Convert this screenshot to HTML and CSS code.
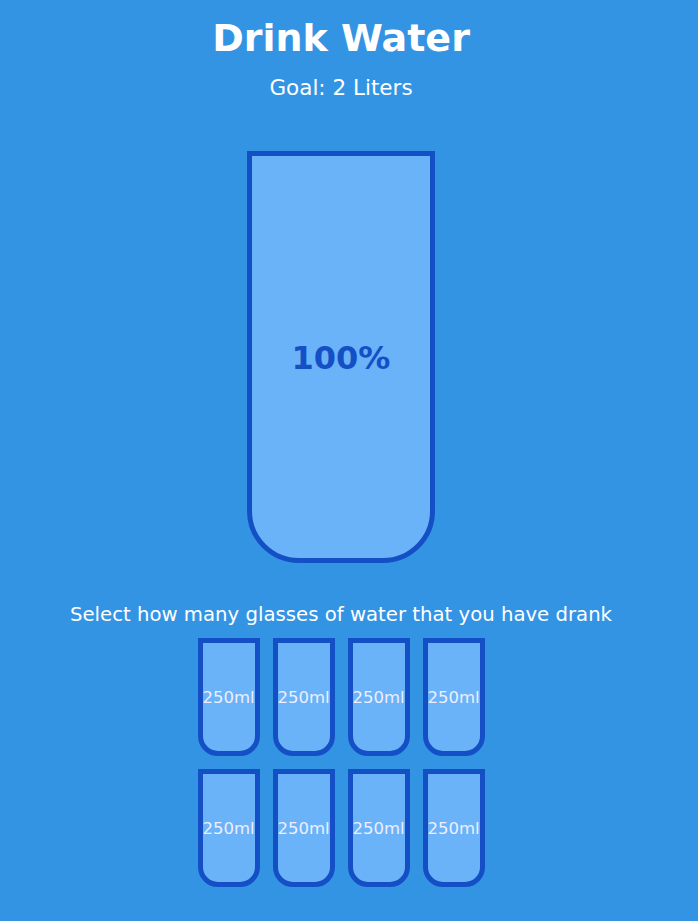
FILE: index.html
```html
<!DOCTYPE html>
<html lang="en">
<head>
<meta charset="UTF-8">
<title>Drink Water</title>
<link rel="stylesheet" href="styles.css">
</head>
<body>
<main class="page">
  <h1 class="title">Drink Water</h1>
  <h3 class="goal">Goal: 2 Liters</h3>
  <div class="cup">
    <div class="percentage">100%</div>
  </div>
  <p class="text">Select how many glasses of water that you have drank</p>
  <div class="cups">
    <div class="cup-small">250ml</div>
    <div class="cup-small">250ml</div>
    <div class="cup-small">250ml</div>
    <div class="cup-small">250ml</div>
    <div class="cup-small">250ml</div>
    <div class="cup-small">250ml</div>
    <div class="cup-small">250ml</div>
    <div class="cup-small">250ml</div>
  </div>
</main>
</body>
</html>
```
FILE: styles.css
```css
html, body {
  margin: 0;
  padding: 0;
  background: #3494e4;
}
body {
  font-family: "DejaVu Sans", "Open Sans", sans-serif;
  color: #fff;
  height: 921px;
  overflow: hidden;
}
.page {
  width: 682px;
  display: flex;
  flex-direction: column;
  align-items: center;
}
.title {
  margin: 14px 0 0;
  font-size: 38px;
  line-height: 48px;
  font-weight: 700;
}
.goal {
  margin: 12px 0 0;
  font-size: 21.5px;
  line-height: 28px;
  font-weight: 400;
}
.cup {
  margin-top: 49px;
  width: 188px;
  height: 412px;
  box-sizing: border-box;
  border: 5px solid #144fc6;
  border-radius: 0 0 52px 52px;
  background: #6ab3f8;
  display: flex;
  align-items: center;
  justify-content: center;
}
.percentage {
  color: #144fc6;
  font-size: 32px;
  font-weight: 700;
  margin-top: 2px;
}
.text {
  margin: 40px 0 11px;
  font-size: 19.7px;
  line-height: 24px;
}
.cups {
  display: grid;
  grid-template-columns: repeat(4, 62px);
  gap: 13px;
}
.cup-small {
  width: 62px;
  height: 118px;
  box-sizing: border-box;
  border: 5px solid #144fc6;
  border-radius: 0 0 20px 20px;
  background: #6ab3f8;
  color: #eef;
  font-size: 16.5px;
  display: flex;
  align-items: center;
  justify-content: center;
  white-space: nowrap;
  overflow: visible;
}
```
